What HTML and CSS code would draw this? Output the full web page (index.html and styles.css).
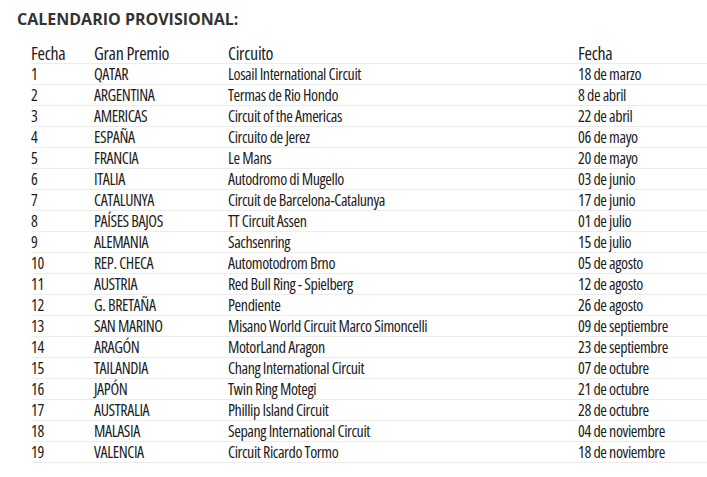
FILE: index.html
```html
<!DOCTYPE html>
<html lang="es"><head><meta charset="utf-8"><link rel="stylesheet" href="styles.css"></head>
<body>
<div class="wrap">
<h3 class="title">CALENDARIO PROVISIONAL:</h3>
<table class="cal">
<thead><tr><th class="c1">Fecha</th><th class="c2">Gran Premio</th><th class="c3">Circuito</th><th class="c4">Fecha</th></tr></thead>
<tbody>
<tr><td>1</td><td>QATAR</td><td>Losail International Circuit</td><td>18 de marzo</td></tr>
<tr><td>2</td><td>ARGENTINA</td><td>Termas de Rio Hondo</td><td>8 de abril</td></tr>
<tr><td>3</td><td>AMERICAS</td><td>Circuit of the Americas</td><td>22 de abril</td></tr>
<tr><td>4</td><td>ESPAÑA</td><td>Circuito de Jerez</td><td>06 de mayo</td></tr>
<tr><td>5</td><td>FRANCIA</td><td>Le Mans</td><td>20 de mayo</td></tr>
<tr><td>6</td><td>ITALIA</td><td>Autodromo di Mugello</td><td>03 de junio</td></tr>
<tr><td>7</td><td>CATALUNYA</td><td>Circuit de Barcelona-Catalunya</td><td>17 de junio</td></tr>
<tr><td>8</td><td>PAÍSES BAJOS</td><td>TT Circuit Assen</td><td>01 de julio</td></tr>
<tr><td>9</td><td>ALEMANIA</td><td>Sachsenring</td><td>15 de julio</td></tr>
<tr><td>10</td><td>REP. CHECA</td><td>Automotodrom Brno</td><td>05 de agosto</td></tr>
<tr><td>11</td><td>AUSTRIA</td><td>Red Bull Ring - Spielberg</td><td>12 de agosto</td></tr>
<tr><td>12</td><td>G. BRETAÑA</td><td>Pendiente</td><td>26 de agosto</td></tr>
<tr><td>13</td><td>SAN MARINO</td><td>Misano World Circuit Marco Simoncelli</td><td>09 de septiembre</td></tr>
<tr><td>14</td><td>ARAGÓN</td><td>MotorLand Aragon</td><td>23 de septiembre</td></tr>
<tr><td>15</td><td>TAILANDIA</td><td>Chang International Circuit</td><td>07 de octubre</td></tr>
<tr><td>16</td><td>JAPÓN</td><td>Twin Ring Motegi</td><td>21 de octubre</td></tr>
<tr><td>17</td><td>AUSTRALIA</td><td>Phillip Island Circuit</td><td>28 de octubre</td></tr>
<tr><td>18</td><td>MALASIA</td><td>Sepang International Circuit</td><td>04 de noviembre</td></tr>
<tr><td>19</td><td>VALENCIA</td><td>Circuit Ricardo Tormo</td><td>18 de noviembre</td></tr>
</tbody>
</table>
</div>
</body></html>
```
FILE: styles.css
```css
html,body{margin:0;padding:0;background:#fff}
.wrap{padding:8px 0 0 17px}
.title{margin:0;font-family:"Open Sans",sans-serif;font-weight:700;font-size:16px;line-height:22px;color:#333}
.cal{margin:13px 0 0 14px;width:676px;border-collapse:collapse;table-layout:fixed;font-family:"Open Sans",sans-serif;font-stretch:condensed;color:#1c1c1c}
.cal th,.cal td{padding:0;text-align:left;vertical-align:middle;border-bottom:1px solid #ececec;white-space:nowrap;font-weight:500}
.cal th{font-size:18px;height:20px;line-height:20px;letter-spacing:-0.3px}
.cal td{font-size:16px;height:20px;line-height:20px;letter-spacing:-0.4px}
.c1{width:63px}
.c2{width:134px}
.c3{width:350px}
.c4{width:129px}
```
